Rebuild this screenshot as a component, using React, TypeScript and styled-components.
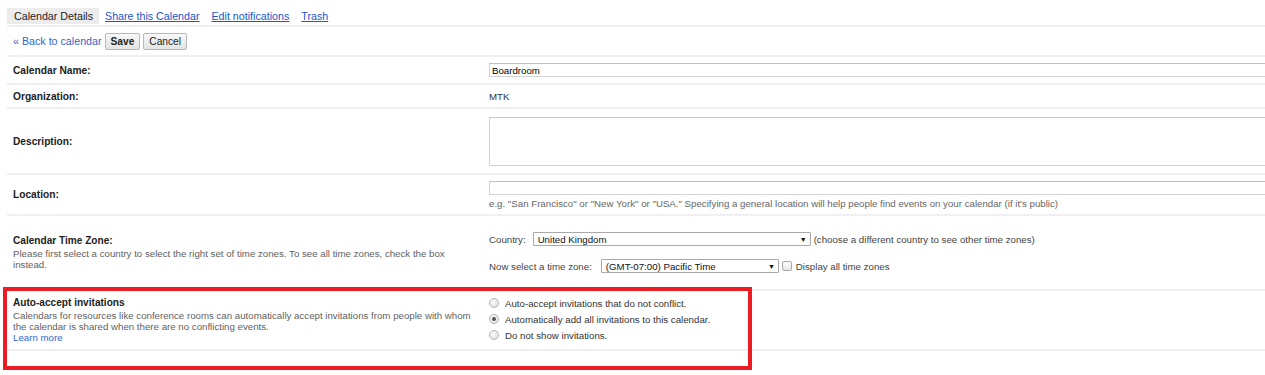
import styled, { createGlobalStyle } from "styled-components";

const GlobalStyle = createGlobalStyle`
  body {
    margin: 0;
    background: #fff;
    font-family: "Liberation Sans", Arial, sans-serif;
    font-size: 9.7px;
    color: #222;
    overflow: hidden;
  }
`;

const Page = styled.div`
  position: relative;
  width: 1265px;
  height: 375px;
  padding: 8px 0 0 7px;
  box-sizing: border-box;
  overflow: hidden;
`;

const TabBar = styled.div`
  display: flex;
  align-items: stretch;
  height: 16px;
  font-size: 10.7px;
  border-bottom: 2px solid #f0f0f0;
  padding-bottom: 1px;
`;

const Tab = styled.a<{ $active?: boolean }>`
  display: flex;
  align-items: center;
  padding: ${(p) => (p.$active ? "0 6px 0 7px" : "0 6px")};
  background: ${(p) => (p.$active ? "#ececec" : "transparent")};
  color: ${(p) => (p.$active ? "#222" : "#2255cc")};
  text-decoration: ${(p) => (p.$active ? "none" : "underline")};
  cursor: pointer;
`;

const ActionBar = styled.div`
  display: flex;
  align-items: center;
  gap: 3px;
  height: 28px;
  padding: 0 6px;
  font-size: 10.7px;
  border-bottom: 2px solid #f0f0f0;
`;

const BackLink = styled.a`
  color: #3366cc;
  cursor: pointer;
`;

const Button = styled.button<{ $primary?: boolean }>`
  height: 17px;
  padding: 0 5px;
  font-family: inherit;
  font-size: 10.2px;
  font-weight: ${(p) => (p.$primary ? "bold" : "normal")};
  color: #222;
  background: linear-gradient(#f8f8f8, #e4e4e4);
  border: 1px solid #b8b8b8;
  border-radius: 2px;
  cursor: pointer;
`;

const Row = styled.div<{ $h: number }>`
  display: grid;
  grid-template-columns: 476px 1fr;
  align-items: center;
  height: ${(p) => p.$h}px;
  padding-left: 6px;
  border-bottom: 2px solid #f0f0f0;
  box-sizing: border-box;
`;

const Label = styled.div`
  font-weight: bold;
  font-size: 10.2px;
  color: #222;
`;

const Title = styled.div`
  font-weight: bold;
  font-size: 10.1px;
  color: #222;
  margin-bottom: 2px;
`;

const Hint = styled.div`
  color: #5f5f5f;
  line-height: 11px;
  width: 466px;
`;

const LearnMore = styled.a`
  display: block;
  color: #3366cc;
  line-height: 11px;
  cursor: pointer;
`;

const Value = styled.div`
  color: #333;
`;

const TextInput = styled.input`
  width: calc(100% + 20px);
  height: 14px;
  padding: 0 2px;
  margin: 0;
  box-sizing: border-box;
  font-family: inherit;
  font-size: 9.7px;
  color: #000;
  border: 1px solid #d4d4d4;
  border-top-color: #c0c0c0;
  outline: none;
`;

const TextArea = styled.textarea`
  display: block;
  width: calc(100% + 20px);
  height: 49px;
  margin: 0;
  box-sizing: border-box;
  border: 1px solid #d4d4d4;
  border-top-color: #c8c8c8;
  resize: none;
  outline: none;
`;

const Stack = styled.div<{ $gap: number }>`
  display: flex;
  flex-direction: column;
  gap: ${(p) => p.$gap}px;
`;

const Note = styled.div`
  color: #666;
`;

const Line = styled.div`
  display: flex;
  align-items: center;
  color: #444;
`;

const Select = styled.div<{ $w: number; $ml: number }>`
  display: flex;
  align-items: center;
  justify-content: space-between;
  width: ${(p) => p.$w}px;
  height: 14px;
  padding: 0 3px 0 4px;
  margin: 0 3px 0 ${(p) => p.$ml}px;
  box-sizing: border-box;
  border: 1px solid #a9a9a9;
  border-radius: 1px;
  color: #111;
`;

const Arrow = styled.span`
  font-size: 7px;
  color: #111;
`;

const Check = styled.span`
  display: inline-block;
  width: 10px;
  height: 10px;
  margin: 0 4px 0 0;
  box-sizing: border-box;
  border: 1px solid #aaa;
  border-radius: 2px;
  background: linear-gradient(#fafafa, #e8e8e8);
`;

const RadioList = styled.div`
  display: flex;
  flex-direction: column;
  gap: 3px;
  margin-top: -2px;
`;

const RadioItem = styled.label`
  display: flex;
  align-items: center;
  gap: 6px;
  color: #333;
  height: 13px;
`;

const RadioDot = styled.span<{ $on?: boolean }>`
  position: relative;
  width: 10px;
  height: 10px;
  box-sizing: border-box;
  border-radius: 50%;
  border: 1px solid #b5b5b5;
  background: radial-gradient(circle at 40% 35%, #fdfdfd, #d8d8d8);
  &::after {
    content: "";
    display: ${(p) => (p.$on ? "block" : "none")};
    position: absolute;
    left: 2px;
    top: 2px;
    width: 4px;
    height: 4px;
    border-radius: 50%;
    background: #555;
  }
`;

const Highlight = styled.div`
  position: absolute;
  left: 3px;
  top: 287px;
  width: 749px;
  height: 83px;
  border: 4px solid #ed1c24;
  box-sizing: border-box;
  pointer-events: none;
`;

export default function App() {
  return (
    <>
      <GlobalStyle />
      <Page>
        <TabBar>
          <Tab $active>Calendar Details</Tab>
          <Tab>Share this Calendar</Tab>
          <Tab>Edit notifications</Tab>
          <Tab>Trash</Tab>
        </TabBar>

        <ActionBar>
          <BackLink>« Back to calendar</BackLink>
          <Button $primary>Save</Button>
          <Button>Cancel</Button>
        </ActionBar>

        <Row $h={28}>
          <Label>Calendar Name:</Label>
          <TextInput defaultValue="Boardroom" />
        </Row>

        <Row $h={24}>
          <Label>Organization:</Label>
          <Value>MTK</Value>
        </Row>

        <Row $h={66}>
          <Label>Description:</Label>
          <TextArea />
        </Row>

        <Row $h={41}>
          <Label>Location:</Label>
          <Stack $gap={3}>
            <TextInput />
            <Note>
              e.g. "San Francisco" or "New York" or "USA." Specifying a general location will help people find
              events on your calendar (if it's public)
            </Note>
          </Stack>
        </Row>

        <Row $h={75}>
          <div>
            <Title>Calendar Time Zone:</Title>
            <Hint>
              Please first select a country to select the right set of time zones. To see all time zones, check the box
              instead.
            </Hint>
          </div>
          <Stack $gap={13}>
            <Line>
              Country:
              <Select $w={278} $ml={7}>
                United Kingdom
                <Arrow>▼</Arrow>
              </Select>
              <span>(choose a different country to see other time zones)</span>
            </Line>
            <Line>
              Now select a time zone:
              <Select $w={178} $ml={9}>
                (GMT-07:00) Pacific Time
                <Arrow>▼</Arrow>
              </Select>
              <Check />
              <span>Display all time zones</span>
            </Line>
          </Stack>
        </Row>

        <Row $h={60}>
          <div>
            <Title>Auto-accept invitations</Title>
            <Hint>
              Calendars for resources like conference rooms can automatically accept invitations from people with whom
              the calendar is shared when there are no conflicting events.
            </Hint>
            <LearnMore>Learn more</LearnMore>
          </div>
          <RadioList>
            <RadioItem>
              <RadioDot />
              Auto-accept invitations that do not conflict.
            </RadioItem>
            <RadioItem>
              <RadioDot $on />
              Automatically add all invitations to this calendar.
            </RadioItem>
            <RadioItem>
              <RadioDot />
              Do not show invitations.
            </RadioItem>
          </RadioList>
        </Row>

        <Highlight />
      </Page>
    </>
  );
}
